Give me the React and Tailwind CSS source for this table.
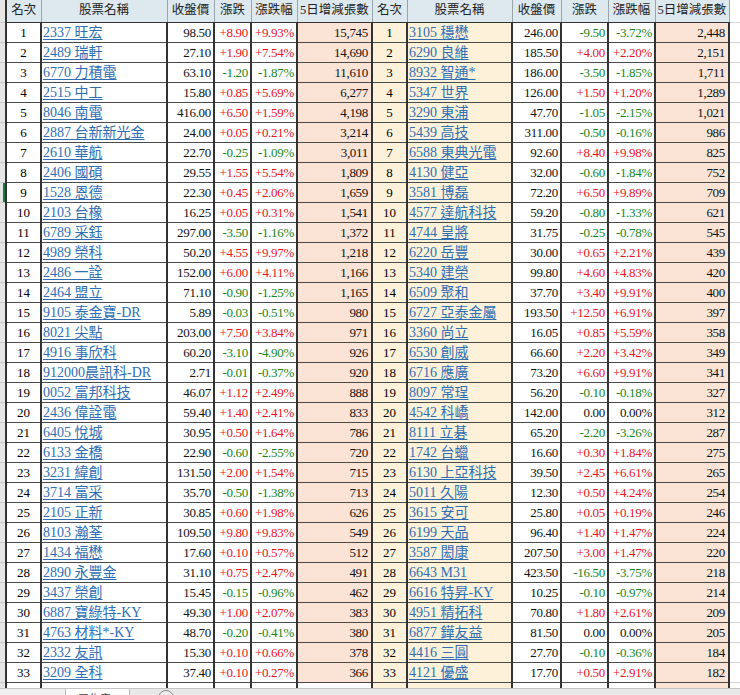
import React from 'react';

const leftRows = [
  ['2337 旺宏', '98.50', '+8.90', '+9.93%', '15,745'],
  ['2489 瑞軒', '27.10', '+1.90', '+7.54%', '14,690'],
  ['6770 力積電', '63.10', '-1.20', '-1.87%', '11,610'],
  ['2515 中工', '15.80', '+0.85', '+5.69%', '6,277'],
  ['8046 南電', '416.00', '+6.50', '+1.59%', '4,198'],
  ['2887 台新新光金', '24.00', '+0.05', '+0.21%', '3,214'],
  ['2610 華航', '22.70', '-0.25', '-1.09%', '3,011'],
  ['2406 國碩', '29.55', '+1.55', '+5.54%', '1,809'],
  ['1528 恩德', '22.30', '+0.45', '+2.06%', '1,659'],
  ['2103 台橡', '16.25', '+0.05', '+0.31%', '1,541'],
  ['6789 采鈺', '297.00', '-3.50', '-1.16%', '1,372'],
  ['4989 榮科', '50.20', '+4.55', '+9.97%', '1,218'],
  ['2486 一詮', '152.00', '+6.00', '+4.11%', '1,166'],
  ['2464 盟立', '71.10', '-0.90', '-1.25%', '1,165'],
  ['9105 泰金寶-DR', '5.89', '-0.03', '-0.51%', '980'],
  ['8021 尖點', '203.00', '+7.50', '+3.84%', '971'],
  ['4916 事欣科', '60.20', '-3.10', '-4.90%', '926'],
  ['912000晨訊科-DR', '2.71', '-0.01', '-0.37%', '920'],
  ['0052 富邦科技', '46.07', '+1.12', '+2.49%', '888'],
  ['2436 偉詮電', '59.40', '+1.40', '+2.41%', '833'],
  ['6405 悅城', '30.95', '+0.50', '+1.64%', '786'],
  ['6133 金橋', '22.90', '-0.60', '-2.55%', '720'],
  ['3231 緯創', '131.50', '+2.00', '+1.54%', '715'],
  ['3714 富采', '35.70', '-0.50', '-1.38%', '713'],
  ['2105 正新', '30.85', '+0.60', '+1.98%', '626'],
  ['8103 瀚荃', '109.50', '+9.80', '+9.83%', '549'],
  ['1434 福懋', '17.60', '+0.10', '+0.57%', '512'],
  ['2890 永豐金', '31.10', '+0.75', '+2.47%', '491'],
  ['3437 榮創', '15.45', '-0.15', '-0.96%', '462'],
  ['6887 寶綠特-KY', '49.30', '+1.00', '+2.07%', '383'],
  ['4763 材料*-KY', '48.70', '-0.20', '-0.41%', '380'],
  ['2332 友訊', '15.30', '+0.10', '+0.66%', '378'],
  ['3209 全科', '37.40', '+0.10', '+0.27%', '366'],
];

const rightRows = [
  ['3105 穩懋', '246.00', '-9.50', '-3.72%', '2,448'],
  ['6290 良維', '185.50', '+4.00', '+2.20%', '2,151'],
  ['8932 智通*', '186.00', '-3.50', '-1.85%', '1,711'],
  ['5347 世界', '126.00', '+1.50', '+1.20%', '1,289'],
  ['3290 東浦', '47.70', '-1.05', '-2.15%', '1,021'],
  ['5439 高技', '311.00', '-0.50', '-0.16%', '986'],
  ['6588 東典光電', '92.60', '+8.40', '+9.98%', '825'],
  ['4130 健亞', '32.00', '-0.60', '-1.84%', '752'],
  ['3581 博磊', '72.20', '+6.50', '+9.89%', '709'],
  ['4577 達航科技', '59.20', '-0.80', '-1.33%', '621'],
  ['4744 皇將', '31.75', '-0.25', '-0.78%', '545'],
  ['6220 岳豐', '30.00', '+0.65', '+2.21%', '439'],
  ['5340 建榮', '99.80', '+4.60', '+4.83%', '420'],
  ['6509 聚和', '37.70', '+3.40', '+9.91%', '400'],
  ['6727 亞泰金屬', '193.50', '+12.50', '+6.91%', '397'],
  ['3360 尚立', '16.05', '+0.85', '+5.59%', '358'],
  ['6530 創威', '66.60', '+2.20', '+3.42%', '349'],
  ['6716 應廣', '73.20', '+6.60', '+9.91%', '341'],
  ['8097 常珵', '56.20', '-0.10', '-0.18%', '327'],
  ['4542 科嶠', '142.00', '0.00', '0.00%', '312'],
  ['8111 立碁', '65.20', '-2.20', '-3.26%', '287'],
  ['1742 台蠟', '16.60', '+0.30', '+1.84%', '275'],
  ['6130 上亞科技', '39.50', '+2.45', '+6.61%', '265'],
  ['5011 久陽', '12.30', '+0.50', '+4.24%', '254'],
  ['3615 安可', '25.80', '+0.05', '+0.19%', '246'],
  ['6199 天品', '96.40', '+1.40', '+1.47%', '224'],
  ['3587 閎康', '207.50', '+3.00', '+1.47%', '220'],
  ['6643 M31', '423.50', '-16.50', '-3.75%', '218'],
  ['6616 特昇-KY', '10.25', '-0.10', '-0.97%', '214'],
  ['4951 精拓科', '70.80', '+1.80', '+2.61%', '209'],
  ['6877 鏵友益', '81.50', '0.00', '0.00%', '205'],
  ['4416 三圓', '27.70', '-0.10', '-0.36%', '184'],
  ['4121 優盛', '17.70', '+0.50', '+2.91%', '182'],
];

const headers = ['名次', '股票名稱', '收盤價', '漲跌', '漲跌幅', '5日增減張數'];

// 欄寬 (px): 左側灰條, 左表 6 欄, 右表 6 欄, 最右空欄
const widths = [6, 35, 126, 47, 37, 46, 75, 35, 105, 49, 47, 47, 74, 11];

const tone = (v) => {
  if (v.startsWith('+')) return 'text-[#e8141c]';
  if (v.startsWith('-')) return 'text-[#16861a]';
  return 'text-[#111]';
};

const cell = 'border-r-2 border-r-[#333] border-b border-b-[#4a4a4a] p-0 overflow-hidden whitespace-nowrap';
const num = 'text-right pr-[2px] text-[13px] tracking-[-0.3px]';

function Half({ row, idx, right }) {
  const rankBg = right ? 'bg-[#fdf2d9]' : 'bg-white';
  const nameBg = right ? 'bg-[#fdf2d9]' : 'bg-white';
  if (!row) {
    return (
      <>
        <td className={`${cell} ${rankBg}`} />
        <td className={`${cell} ${nameBg}`} />
        <td className={cell} />
        <td className={cell} />
        <td className={cell} />
        <td className={`${cell} ${right ? 'bg-[#fbe3d5]' : 'bg-white'}`} />
      </>
    );
  }
  const [name, price, chg, pct, vol] = row;
  return (
    <>
      <td className={`${cell} ${rankBg} text-center text-[13px]`}>{idx + 1}</td>
      <td className={`${cell} ${nameBg} pl-[1px] text-[14px] text-[#2f6eb5] underline decoration-[#2f6eb5] underline-offset-2`}>
        {name}
      </td>
      <td className={`${cell} ${num} text-[#111]`}>{price}</td>
      <td className={`${cell} ${num} ${tone(chg)}`}>{chg}</td>
      <td className={`${cell} ${num} ${tone(pct)}`}>{pct}</td>
      <td className={`${cell} ${num} bg-[#fbe3d5] text-[#111] pr-[3px]`}>{vol}</td>
    </>
  );
}

export default function App() {
  const rows = Array.from({ length: 35 }, (_, i) => i);

  return (
    <div
      className="w-[740px] h-[695px] overflow-hidden bg-white flex flex-col"
      style={{ fontFamily: '"Liberation Serif", "Noto Sans CJK TC", serif' }}
    >
      <div className="h-[688px] overflow-hidden shrink-0">
        <table className="table-fixed border-collapse w-[740px] leading-[19px]">
          <colgroup>
            {widths.map((w, i) => (
              <col key={i} style={{ width: w }} />
            ))}
          </colgroup>
          <thead>
            <tr className="h-[22px]">
              <th className="bg-[#e6e6e6] border-r-2 border-r-[#333] border-b border-b-[#c8c8c8] p-0" />
              {[...headers, ...headers].map((h, i) => (
                <th
                  key={i}
                  className="bg-[#dee9ef] border-r border-r-[#9aa4aa] border-b border-b-[#333] p-0 text-center font-normal text-[12.5px] text-[#222] whitespace-nowrap"
                >
                  {h}
                </th>
              ))}
              <th className="bg-white border-b border-b-[#d6d6d6] p-0" />
            </tr>
          </thead>
          <tbody>
            {rows.map((i) => (
              <tr key={i} className="h-[20px]">
                <td
                  className={`bg-[#e6e6e6] border-r-2 border-r-[#333] border-b border-b-[#c8c8c8] p-0 ${
                    i === 8 ? 'shadow-[inset_-2px_0_0_#1f7a3a]' : ''
                  }`}
                />
                <Half row={leftRows[i]} idx={i} />
                <Half row={rightRows[i]} idx={i} right />
                <td className="bg-white border-b border-b-[#d6d6d6] p-0" />
              </tr>
            ))}
          </tbody>
        </table>
      </div>

      {/* 工作表分頁列 */}
      <div
        className="h-[30px] shrink-0 bg-[#e8e8e8] border-t border-[#c4c4c4] flex items-start"
        style={{ fontFamily: '"Noto Sans CJK TC", sans-serif' }}
      >
        <div className="w-[66px] h-[22px] bg-[#f0f0f0] border-r border-[#b8b8b8]" />
        <div className="w-[64px] h-[22px] bg-white border-r border-[#b8b8b8] text-[11px] text-[#444] text-center leading-[18px]">
          工作表1
        </div>
        <div className="ml-[28px] mt-[1px] w-[16px] h-[16px] rounded-full border border-[#888] bg-[#eee]" />
      </div>
    </div>
  );
}
